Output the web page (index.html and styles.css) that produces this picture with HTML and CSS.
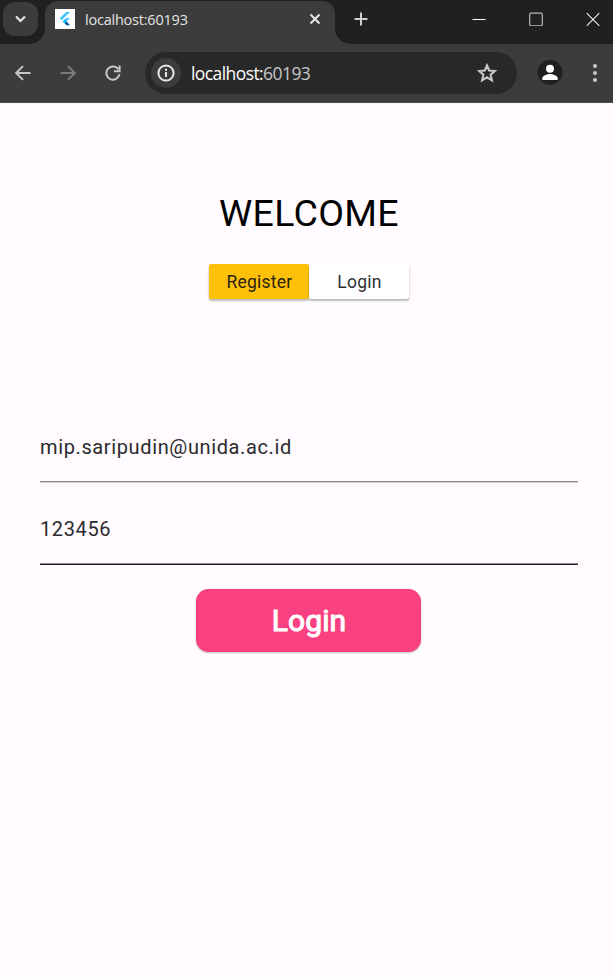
FILE: index.html
```html
<!DOCTYPE html>
<html lang="en">
<head>
<meta charset="utf-8">
<title>localhost:60193</title>
<link rel="stylesheet" href="styles.css">
</head>
<body>
<header class="browser">
  <div class="tabstrip">
    <div class="tab-search"><svg width="35" height="34" viewBox="0 0 35 34"><path d="M13 14.500l4.500 4.500 4.500-4.500" fill="none" stroke="#e8e8e8" stroke-width="2.200"/></svg></div>
    <div class="tab">
      <svg class="favicon" width="20" height="20" viewBox="0 0 20 20"><path fill="#fff" d="M0 0h20v20H0z"/><path fill="#47c5fb" d="M11.300 3h3.700L6.600 11.300l-2-2zM11.300 9h3.700l-3.300 3.300-2 2-2-1.800z"/><path fill="#00569e" d="M9.600 14.300l2-1.800 3.400 3.800h-3.500z"/><path fill="#00b5f8" d="M7.800 12.500l1.900-1.900 1.900 1.900-1.900 1.900z"/></svg>
      <span class="tab-title">localhost:60193</span>
      <svg class="tab-close" width="12" height="12" viewBox="0 0 12 12"><path d="M1.500 1.500l9 9m0-9l-9 9" stroke="#e8e8e8" stroke-width="1.900"/></svg>
    </div>
    <svg class="new-tab" width="14" height="14" viewBox="0 0 14 14"><path d="M7 .5v13M.5 7h13" stroke="#cfcfcf" stroke-width="2"/></svg>
    <div class="window-controls">
      <svg width="14" height="14" viewBox="0 0 14 14"><path d="M.5 7.500h13" stroke="#fff"/></svg>
      <svg width="14" height="14" viewBox="0 0 14 14"><rect x=".7" y="1.200" width="12.600" height="12.600" rx="1.500" fill="none" stroke="#b5b5b5" stroke-width="1.200"/></svg>
      <svg width="14" height="14" viewBox="0 0 14 14"><path d="M.7 1.200l12.600 12.600m0-12.600L.7 13.800" stroke="#eee" stroke-width="1.100"/></svg>
    </div>
  </div>
  <div class="toolbar">
    <svg class="nav" width="16" height="16" viewBox="0 0 16 16"><path d="M15.500 8h-14M8 1.200L1.200 8 8 14.800" fill="none" stroke="#c8c8c8" stroke-width="1.900"/></svg>
    <svg class="nav" width="16" height="16" viewBox="0 0 16 16"><path d="M.5 8h14M8 1.200L14.800 8 8 14.800" fill="none" stroke="#7c7c7c" stroke-width="1.900"/></svg>
    <svg class="nav" width="16" height="16" viewBox="0 0 16 16"><path d="M14.500 9.200A6.600 6.600 0 1 1 13.300 4.200M14.600.5v5.700H9" fill="none" stroke="#c8c8c8" stroke-width="2"/></svg>
    <div class="address">
      <span class="site-info"><svg width="18" height="18" viewBox="0 0 18 18"><circle cx="9" cy="9" r="7.600" fill="none" stroke="#e8e8e8" stroke-width="2"/><path d="M9 8v5M9 4.800v2" stroke="#e8e8e8" stroke-width="2"/></svg></span>
      <span class="url">localhost:<span class="port">60193</span></span>
      <svg class="star" width="20" height="20" viewBox="0 0 20 20"><path d="M10 2.500l2.200 5 5.600.5-4.200 3.700 1.300 5.600-4.900-3-4.900 3 1.300-5.600L2.200 8l5.600-.5z" fill="none" stroke="#c8c8c8" stroke-width="2.100"/></svg>
    </div>
    <svg class="profile" width="26" height="26" viewBox="0 0 26 26"><circle cx="13" cy="12.500" r="12.500" fill="#1f2120"/><circle cx="13" cy="8.800" r="4" fill="#fff"/><path d="M5.300 20v-1.500c0-3 5-4.500 7.700-4.500s7.700 1.500 7.700 4.500V20z" fill="#fff"/></svg>
    <svg class="menu" width="4" height="18" viewBox="0 0 4 18"><g fill="#c8c8c8"><circle cx="2" cy="2" r="2"/><circle cx="2" cy="9" r="2"/><circle cx="2" cy="16" r="2"/></g></svg>
  </div>
</header>
<main class="page">
  <h1 class="welcome">WELCOME</h1>
  <div class="switch">
    <button class="switch-button selected">Register</button>
    <button class="switch-button">Login</button>
  </div>
  <form class="form">
    <input class="field" type="text" aria-label="Email" value="mip.saripudin@unida.ac.id">
    <input class="field focused" type="text" aria-label="Password" value="123456">
    <button class="submit" type="button">Login</button>
  </form>
</main>
</body>
</html>
```
FILE: styles.css
```css
* { box-sizing: border-box; }
body { margin: 0; height: 977px; overflow: hidden; background: #fffbfe; font-family: Roboto, sans-serif; }
svg { display: block; flex: none; }
button, input { font-family: inherit; border: 0; padding: 0; margin: 0; outline: 0; }

.browser { height: 103px; background: #3c3c3c; border-bottom: 1px solid #4c4c4e; font-family: "Open Sans", sans-serif; }
.tabstrip { height: 44px; display: flex; background: #1f2120; position: relative; }
.tab-search { width: 35px; height: 34px; margin: 2px 7px 0 3px; border-radius: 12px; background: #3c3c3c; flex: none; }
.tab { position: relative; width: 290px; height: 43px; margin-top: 1px; padding: 0 14px 6px 10px; display: flex; align-items: center; border-radius: 13px 13px 0 0; background: #3c3c3c; flex: none; }
.tab::before, .tab::after { content: ""; position: absolute; bottom: 0; width: 15px; height: 15px; }
.tab::before { left: -15px; background: radial-gradient(circle at 0 0, transparent 14.500px, #3c3c3c 15px); }
.tab::after { right: -15px; background: radial-gradient(circle at 100% 0, transparent 14.500px, #3c3c3c 15px); }
.favicon, .tab-close { position: relative; top: -0.500px; }
.tab-title { margin-left: 10px; font-size: 14.500px; line-height: 20px; letter-spacing: -0.220px; color: #e3e3e3; white-space: nowrap; }
.tab-close { margin-left: auto; }
.new-tab { margin: 12px 0 0 19px; }
.window-controls { margin: 12px 13px 0 auto; display: flex; gap: 43px; }
.toolbar { height: 58px; display: flex; align-items: center; padding-left: 15px; }
.nav { margin-right: 29px; }
.address { width: 372px; height: 42px; margin-left: -5px; padding: 0 20px 0 6px; display: flex; align-items: center; border-radius: 21px; background: #282828; flex: none; }
.site-info { width: 30px; height: 30px; display: grid; place-items: center; border-radius: 50%; background: #3c3c3c; }
.url { margin-left: 10px; font-size: 17.500px; line-height: 24px; letter-spacing: -0.580px; color: #fff; white-space: nowrap; }
.port { color: #c7c7c7; }
.star { margin-left: auto; }
.profile { margin-left: 20px; }
.menu { margin-left: 30px; }

.page { display: flex; flex-direction: column; align-items: center; padding: 88px 35px 0 40px; }
.welcome { margin: 0; font-size: 37.500px; line-height: 44px; font-weight: 400; letter-spacing: 0.300px; color: #000; }
.switch { display: flex; margin-top: 29px; }
.switch-button { width: 100px; height: 35px; padding-left: 1px; border-radius: 2.500px; background: #fff; color: #303032; font-size: 17.500px; letter-spacing: 0.250px; box-shadow: 0 2px 2px rgba(0,0,0,.22), 0 1px 3px rgba(0,0,0,.1); }
.switch-button.selected { background: #ffc107; color: #29230f; }
.form { width: 100%; margin-top: 121px; display: flex; flex-direction: column; align-items: center; }
.field { width: 100%; height: 62px; padding-bottom: 7px; background: transparent; color: #2b2a2e; font-size: 20px; letter-spacing: 0.625px; border-bottom: 1px solid #8b888d; box-shadow: 0 1px #d5d2d6; }
.field.focused { margin-top: 20px; border-bottom: 1px solid #929094; box-shadow: 0 1px #1c1b1f; }
.submit { width: 225px; height: 63px; margin: 25px 1px 0 0; padding: 0 0 1px 1px; border-radius: 12.500px; background: #f94080; color: #fff; font-size: 30px; letter-spacing: 0.120px; -webkit-text-stroke: 1.100px #fff; box-shadow: 0 1px 2px rgba(0,0,0,.25); }
```
